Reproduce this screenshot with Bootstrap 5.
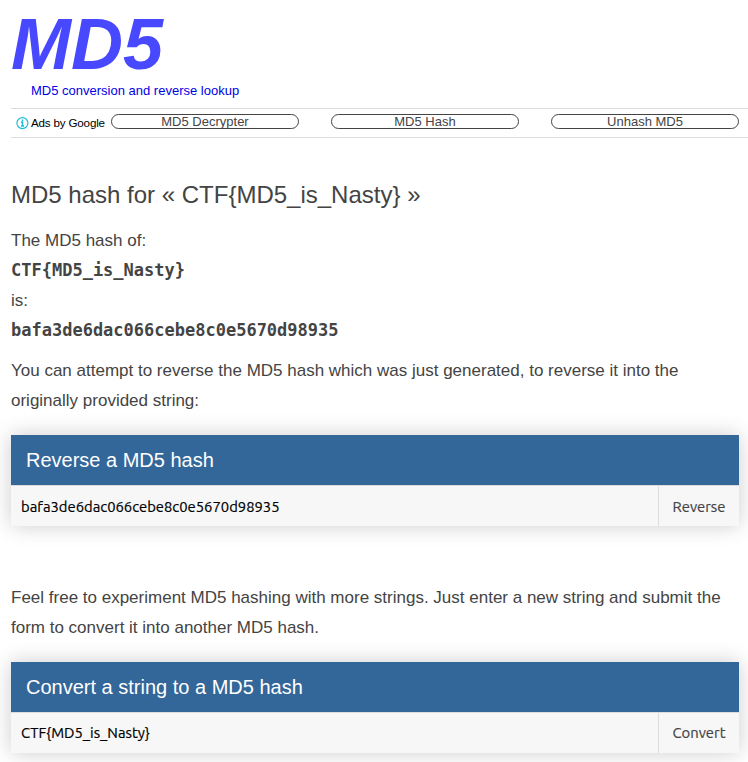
<!DOCTYPE html>
<html lang="en">
<head>
<meta charset="utf-8">
<meta name="viewport" content="width=device-width, initial-scale=1">
<title>MD5 conversion and reverse lookup</title>
<link href="https://cdn.jsdelivr.net/npm/bootstrap@5.3.0/dist/css/bootstrap.min.css" rel="stylesheet">
<style>
html, body { height: 762px; overflow: hidden; }
body { font-family: "Liberation Sans", Arial, sans-serif; color: #444; font-size: 17px; line-height: 30px; padding-left: 11px; background: #fff; }
.site-logo { font-size: 72px; line-height: 80px; font-style: italic; font-weight: 700; color: #4848ff; height: 80px; padding-top: 4px; }
.site-logo a { color: inherit; }
.tagline { font-size: 13px; line-height: 22px; color: #0000e6; padding-left: 20px; height: 28px; }
.ad-strip { height: 30px; border-top: 1px solid #ddd; border-bottom: 1px solid #ddd; padding: 5px 9px 0 5px; }
.ad-label { width: 95px; font-size: 11.6px; letter-spacing: -.17px; line-height: 18px; color: #000; gap: 2px; }
.ad-unit { width: 188px; height: 15px; border: 1px solid #444; border-radius: 8px; font-size: 13px; line-height: 13px; color: #444; }
.ad-list { gap: 32px; }
.content-area { width: 728px; }
h1 { font-size: 24px; line-height: 30px; font-weight: 400; margin: 42px 0 16px; }
code { font: 700 17px/28px "DejaVu Sans Mono", monospace; color: #444; height: 30px; }
.reverse-note { margin: 10px 0 19px; }
.convert-note { margin: 57px 0 19px; }
.hash-form { box-shadow: 0 0 20px rgba(0,0,0,.2); }
.form-title { height: 51px; font-size: 20px; line-height: 50px; font-weight: 400; padding-left: 15px; background: #369; color: #fff; border-bottom: 1px solid #ddd; }
.hash-form .form-control, .hash-form .btn { height: 40px; border: 0; border-radius: 0; background: #f7f7f7; font-family: Ubuntu, "Noto Sans", sans-serif; font-size: 14.8px; line-height: 20px; -webkit-text-stroke: .2px currentColor; }
.hash-form .form-control { color: #000; padding: 10px; }
.hash-form .btn { width: 81px; padding: 10px 0; color: #444; border-left: 1px solid #ddd; }
.hash-form .reverse-btn { padding: 11px 0 9px; }
.hash-form .string-input { padding: 9px 10px 11px; }
</style>
</head>
<body>
<header>
  <div class="site-logo"><a href="#" class="text-decoration-none">MD5</a></div>
  <div class="tagline">MD5 conversion and reverse lookup</div>
</header>
<nav class="ad-strip d-flex align-items-start">
  <div class="ad-label d-flex align-items-center text-nowrap flex-shrink-0">
    <svg width="13" height="13" viewBox="0 0 13 13" fill="none" stroke="#1fbbd6" class="flex-shrink-0" aria-hidden="true"><circle cx="6.4" cy="6.1" r="5.5" stroke-width="1.2"/><path d="M6.5 2.6v1.6M5 5.3h1.5v3.5M5 9h3" stroke-width="1.5"/></svg>
    <span>Ads by Google</span>
  </div>
  <div class="ad-list d-flex">
    <a href="#" class="ad-unit text-center text-decoration-none">MD5 Decrypter</a>
    <a href="#" class="ad-unit text-center text-decoration-none">MD5 Hash</a>
    <a href="#" class="ad-unit text-center text-decoration-none">Unhash MD5</a>
  </div>
</nav>
<main class="content-area">
  <h1>MD5 hash for « CTF{MD5_is_Nasty} »</h1>
  <div class="result">
    <div>The MD5 hash of:</div>
    <code class="d-block">CTF{MD5_is_Nasty}</code>
    <div>is:</div>
    <code class="d-block">bafa3de6dac066cebe8c0e5670d98935</code>
  </div>
  <p class="reverse-note">You can attempt to reverse the MD5 hash which was just generated, to reverse it into the originally provided string:</p>
  <form class="hash-form">
    <h2 class="form-title mb-0">Reverse a MD5 hash</h2>
    <div class="input-group flex-nowrap">
      <input class="form-control" type="text" value="bafa3de6dac066cebe8c0e5670d98935" aria-label="MD5 hash">
      <button class="btn reverse-btn" type="button">Reverse</button>
    </div>
  </form>
  <p class="convert-note">Feel free to experiment MD5 hashing with more strings. Just enter a new string and submit the form to convert it into another MD5 hash.</p>
  <form class="hash-form">
    <h2 class="form-title mb-0">Convert a string to a MD5 hash</h2>
    <div class="input-group flex-nowrap">
      <input class="form-control string-input" type="text" value="CTF{MD5_is_Nasty}" aria-label="String">
      <button class="btn" type="button">Convert</button>
    </div>
  </form>
</main>
<script src="https://cdn.jsdelivr.net/npm/bootstrap@5.3.0/dist/js/bootstrap.bundle.min.js"></script>
</body>
</html>
